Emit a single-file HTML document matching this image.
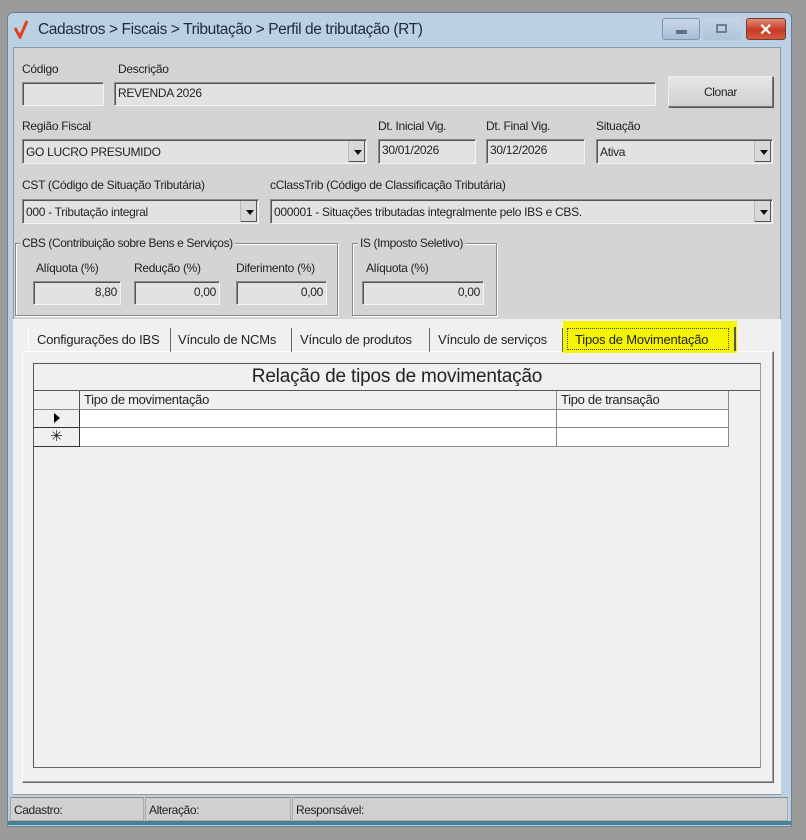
<!DOCTYPE html>
<html><head><meta charset="utf-8"><style>
*{box-sizing:border-box;margin:0;padding:0}
body{width:806px;height:840px;background:#9b9b9b;position:relative;overflow:hidden;font-family:"Liberation Sans",sans-serif;font-size:12px;color:#222}
.a{position:absolute}
.win{left:7px;top:12px;width:785px;height:815px;background:#bcd0e4;border:1px solid #6a7f96;border-radius:6px 6px 0 0}
.title{left:38px;top:21px;font-size:15.5px;color:#1e2a3a;letter-spacing:-0.4px}
.form{left:13px;top:47px;width:768px;height:748px;background:#d4d4d4;border:1px solid #8c9aa8}
.lbl{font-size:12px;color:#222;letter-spacing:-0.3px}
.inp{background:#e2e2e2;border:1px solid #8a8a8a;border-right-color:#f4f4f4;border-bottom-color:#f4f4f4;box-shadow:inset 1px 1px 0 #555;font-size:12px;padding:3px 3px;letter-spacing:-0.3px}
.num{text-align:right}
.dd{position:absolute;right:1px;top:1px;bottom:1px;width:17px;background:#d8d8d8;border-left:1px solid #bbb;box-shadow:inset -1px -1px 0 #555}
.dd:after{content:"";position:absolute;left:5px;top:9px;border:4px solid transparent;border-top:5px solid #111;border-bottom:0}
.grp{border:1px solid #888;box-shadow:1px 1px 0 #fff,inset 1px 1px 0 #fff}
.gt{background:#d4d4d4;padding:0 2px;font-size:12px;letter-spacing:-0.4px}
.tab{top:328px;height:24px;font-size:13px;padding-top:4px;letter-spacing:-0.2px;border-right:1px solid #666}
.cell{border-right:1px solid #8a8a8a;border-bottom:1px solid #8a8a8a}
.status{top:797px;height:24px;font-size:12px;padding:5px 3px;border:1px solid #aaa;border-top-color:#888;background:#d0d0d0;letter-spacing:-0.4px}
</style></head><body>
<div class="a win"></div>
<div class="a" style="left:13px;top:19px;width:14px;height:20px">
<svg width="16" height="20"><path d="M2 9 L7 18 L14 2" stroke="#e0401c" stroke-width="3" fill="none"/></svg></div>
<div class="a title">Cadastros &gt; Fiscais &gt; Tributação &gt; Perfil de tributação (RT)</div>
<div class="a" style="left:662px;top:18px;width:38px;height:22px;border:1px solid #7f95ae;border-radius:3px;background:linear-gradient(#c9d8e8,#a9bfd6)"><div class="a" style="left:13px;top:11px;width:11px;height:4px;background:#5c7088;border-radius:1px"></div></div>
<div class="a" style="left:703px;top:18px;width:38px;height:22px;border-radius:3px;background:linear-gradient(#c5d5e5,#b0c4d8)"><div class="a" style="left:13px;top:6px;width:11px;height:9px;border:2px solid #6a7d93;border-radius:1px"></div></div>
<div class="a" style="left:746px;top:18px;width:40px;height:22px;border:1px solid #7a3a30;border-radius:3px;background:linear-gradient(#e08a78,#c53a24 55%,#d55a3e)"><div class="a" style="left:12px;top:1px;color:#fff;font-size:16px;font-weight:bold">✕</div></div>
<div class="a form"></div>

<div class="a lbl" style="left:22px;top:62px">Código</div>
<div class="a lbl" style="left:118px;top:62px">Descrição</div>
<div class="a inp" style="left:22px;top:82px;width:82px;height:24px"></div>
<div class="a inp" style="left:114px;top:82px;width:542px;height:24px">REVENDA 2026</div>
<div class="a" style="left:668px;top:76px;width:105px;height:31px;background:linear-gradient(#e6e6e6,#d0d0d0);border:1px solid #777;border-top-color:#eee;border-left-color:#eee;box-shadow:1px 1px 0 #555;text-align:center;padding-top:8px;letter-spacing:-0.4px">Clonar</div>

<div class="a lbl" style="left:22px;top:119px">Região Fiscal</div>
<div class="a lbl" style="left:378px;top:119px">Dt. Inicial Vig.</div>
<div class="a lbl" style="left:486px;top:119px">Dt. Final Vig.</div>
<div class="a lbl" style="left:596px;top:119px">Situação</div>
<div class="a inp" style="left:22px;top:139px;width:345px;height:25px;padding-top:5px">GO LUCRO PRESUMIDO<div class="dd"></div></div>
<div class="a inp" style="left:378px;top:139px;width:98px;height:25px">30/01/2026</div>
<div class="a inp" style="left:486px;top:139px;width:99px;height:25px">30/12/2026</div>
<div class="a inp" style="left:596px;top:139px;width:177px;height:25px;padding-top:5px">Ativa<div class="dd"></div></div>

<div class="a lbl" style="left:22px;top:178px">CST (Código de Situação Tributária)</div>
<div class="a lbl" style="left:270px;top:178px">cClassTrib (Código de Classificação Tributária)</div>
<div class="a inp" style="left:22px;top:199px;width:237px;height:25px;padding-top:5px">000 - Tributação integral<div class="dd"></div></div>
<div class="a inp" style="left:270px;top:199px;width:503px;height:25px;padding-top:5px">000001 - Situações tributadas integralmente pelo IBS e CBS.<div class="dd"></div></div>

<div class="a grp" style="left:15px;top:243px;width:323px;height:73px"></div>
<div class="a gt" style="left:20px;top:236px">CBS (Contribuição sobre Bens e Serviços)</div>
<div class="a lbl" style="left:36px;top:261px">Alíquota (%)</div>
<div class="a lbl" style="left:134px;top:261px">Redução (%)</div>
<div class="a lbl" style="left:236px;top:261px">Diferimento (%)</div>
<div class="a inp num" style="left:33px;top:281px;width:88px;height:24px">8,80</div>
<div class="a inp num" style="left:134px;top:281px;width:86px;height:24px">0,00</div>
<div class="a inp num" style="left:236px;top:281px;width:91px;height:24px">0,00</div>
<div class="a grp" style="left:352px;top:243px;width:145px;height:73px"></div>
<div class="a gt" style="left:358px;top:236px">IS (Imposto Seletivo)</div>
<div class="a lbl" style="left:366px;top:261px">Alíquota (%)</div>
<div class="a inp num" style="left:362px;top:281px;width:122px;height:24px">0,00</div>

<div class="a" style="left:13px;top:319px;width:768px;height:476px;background:#f0f0f0;border-bottom:1px solid #999"></div>
<div class="a" style="left:22px;top:351px;width:752px;height:432px;border:1px solid #fff;border-right-color:#666;border-bottom-color:#666;box-shadow:inset -1px -1px 0 #a0a0a0"></div>
<div class="a tab" style="left:28px;width:143px;padding-left:8px;border-left:1px solid #fff">Configurações do IBS</div>
<div class="a tab" style="left:172px;width:120px;padding-left:6px">Vínculo de NCMs</div>
<div class="a tab" style="left:293px;width:137px;padding-left:7px">Vínculo de produtos</div>
<div class="a tab" style="left:431px;width:132px;padding-left:7px">Vínculo de serviços</div>
<div class="a" style="left:563px;top:321px;width:174px;height:32px;background:#f5f500"></div>
<div class="a" style="left:567px;top:328px;width:162px;height:22px;border:1px dotted #444;font-size:13px;padding:3px 0 0 7px;letter-spacing:-0.2px">Tipos de Movimentação</div>
<div class="a" style="left:734px;top:327px;width:2px;height:24px;background:#555"></div>

<div class="a" style="left:33px;top:363px;width:728px;height:405px;border:1px solid #555;border-right-color:#999;border-bottom-color:#666;background:#f0f0f0"></div>
<div class="a" style="left:34px;top:366px;width:726px;text-align:center;font-size:19px;color:#222;letter-spacing:-0.2px">Relação de tipos de movimentação</div>
<div class="a" style="left:34px;top:390px;width:726px;height:1px;background:#555"></div>
<div class="a cell" style="left:34px;top:391px;width:46px;height:19px;border-right-color:#555"></div>
<div class="a cell" style="left:80px;top:391px;width:477px;height:19px;font-size:13px;padding:1px 4px;letter-spacing:-0.3px">Tipo de movimentação</div>
<div class="a cell" style="left:557px;top:391px;width:172px;height:19px;font-size:13px;padding:1px 4px;letter-spacing:-0.3px">Tipo de transação</div>
<div class="a cell" style="left:34px;top:410px;width:46px;height:18px;border-right-color:#333;border-bottom-color:#333"><div class="a" style="left:20px;top:3px;border:5px solid transparent;border-left:6px solid #000;border-right:0;height:0"></div></div>
<div class="a cell" style="left:80px;top:410px;width:477px;height:18px;background:#fff"></div>
<div class="a cell" style="left:557px;top:410px;width:172px;height:18px;background:#fff"></div>
<div class="a cell" style="left:34px;top:428px;width:46px;height:19px;border-right-color:#333;border-bottom-color:#333;text-align:center;font-size:15px;line-height:18px">✳</div>
<div class="a cell" style="left:80px;top:428px;width:477px;height:19px;background:#fff"></div>
<div class="a cell" style="left:557px;top:428px;width:172px;height:19px;background:#fff"></div>

<div class="a status" style="left:10px;width:134px">Cadastro:</div>
<div class="a status" style="left:145px;width:146px">Alteração:</div>
<div class="a status" style="left:292px;width:496px">Responsável:</div>
<div class="a" style="left:8px;top:821px;width:783px;height:4px;background:#4a8096"></div>
</body></html>
